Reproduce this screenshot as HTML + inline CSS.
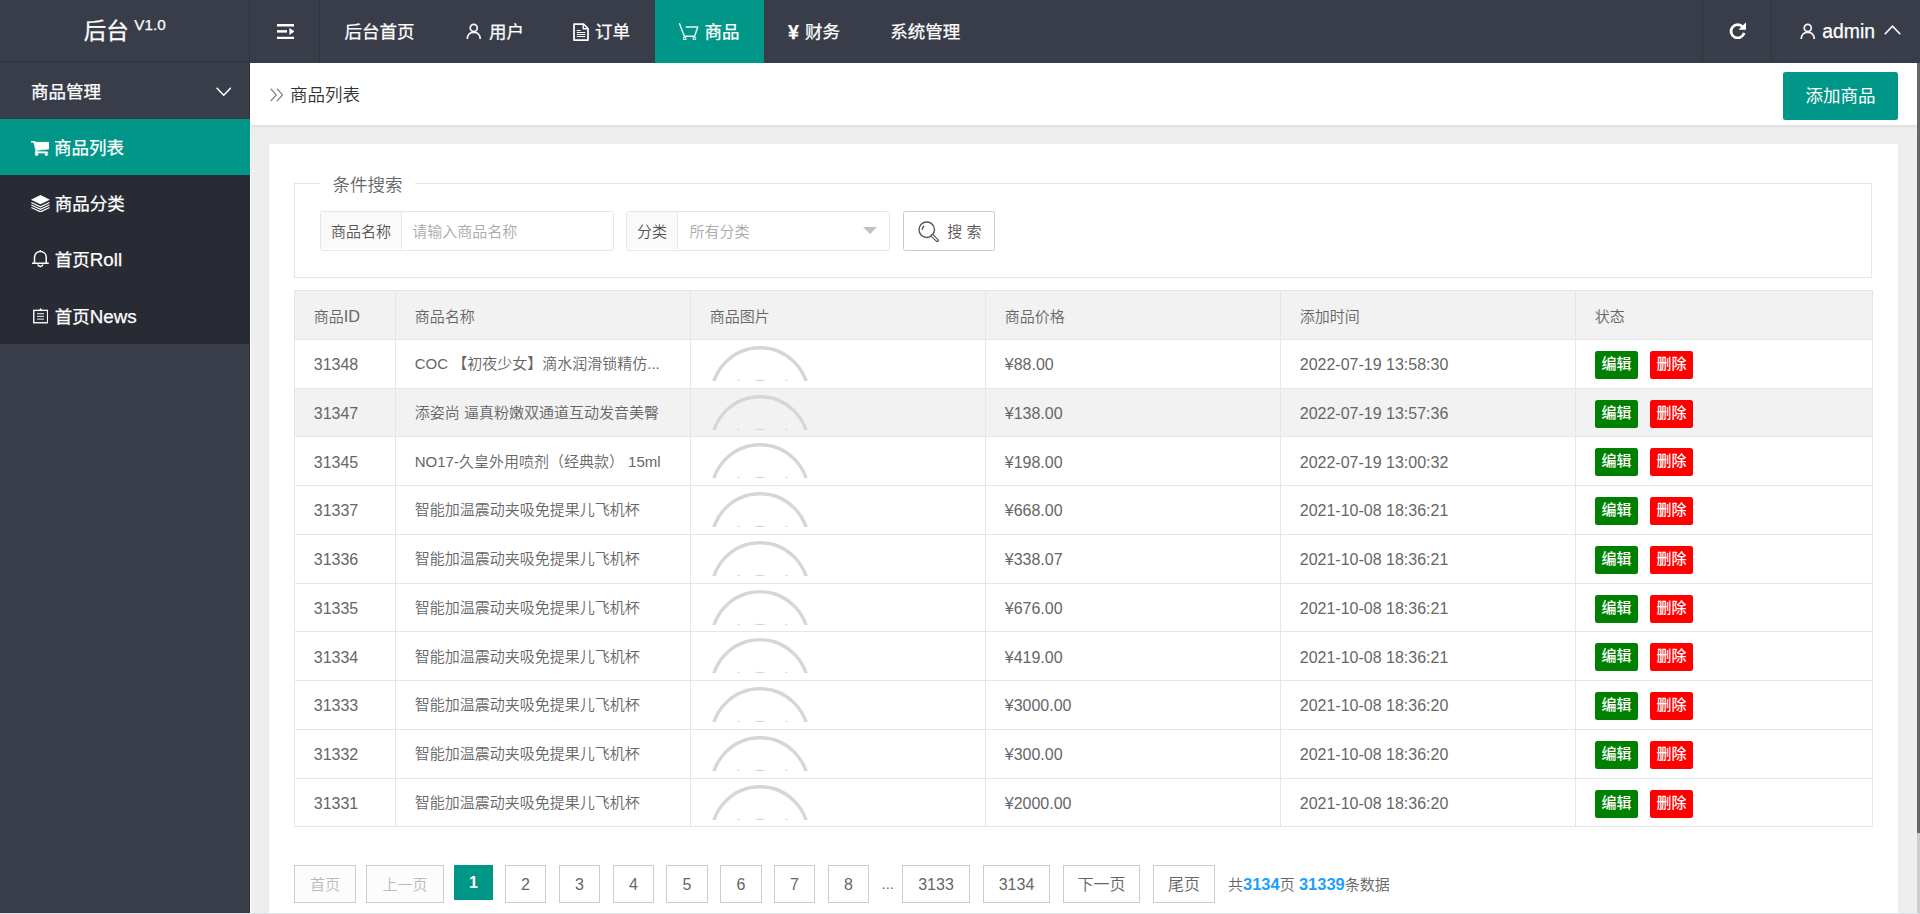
<!DOCTYPE html>
<html lang="zh-CN">
<head>
<meta charset="utf-8">
<title>后台</title>
<style>
html{zoom:1.25;}
@supports not (zoom:1.25){html{transform:scale(1.25);transform-origin:0 0;}}
*{box-sizing:border-box;}
html,body{margin:0;padding:0;}
body{width:1536px;height:731.2px;overflow:hidden;position:relative;background:#eee;color:#333;
  font-family:"Liberation Sans","Noto Sans CJK SC",sans-serif;font-size:14px;line-height:24px;}
ul,li{list-style:none;margin:0;padding:0;}
svg{display:inline-block;vertical-align:middle;}

/* header */
.header{position:absolute;left:0;top:0;width:1536px;height:50px;background:#393D49;color:#fff;-webkit-text-stroke:0.2px #fff;}
.logo{position:absolute;left:0;top:0;width:200px;height:49.4px;border-bottom:1px solid #30343f;border-right:1px solid #30343f;text-align:center;line-height:50px;font-size:18px;color:#fff;}
.logo .t{position:absolute;left:66.9px;top:0.9px;}
.logo sup{position:absolute;left:107.4px;top:-4.6px;font-size:12.2px;font-weight:normal;color:#fff;}
.toggle{position:absolute;left:200px;top:0;width:56px;height:50px;border-right:1px solid #30343f;}
.nav{position:absolute;left:256px;top:0;height:50px;}
.nav li{position:absolute;top:0;height:50px;line-height:50px;font-size:14px;color:#fff;white-space:nowrap;}
.nav li.on{background:#009688;}
.nav li span{position:absolute;top:0.8px;}
.nav li svg{position:absolute;}
.hright{position:absolute;right:0;top:0;height:50px;}
.refresh{position:absolute;left:1361.4px;top:0;width:56px;height:50px;border-left:1px solid #30343f;border-right:1px solid #30343f;}
.admin{position:absolute;left:1418px;top:0;width:118px;height:50px;line-height:50px;}

/* side */
.side{position:absolute;left:0;top:50px;width:200px;height:682px;background:#393D49;border-right:1px solid #2d313b;color:#fff;-webkit-text-stroke:0.2px #fff;}
.side .parent{position:absolute;left:0;top:0;width:200px;height:45px;line-height:45px;}
.side .parent span{position:absolute;left:24.8px;top:0.8px;}
.side .child{position:absolute;left:0;top:45px;width:200px;height:180px;background:#282B33;}
.side .child li{position:relative;height:45px;line-height:45px;}
.side .child li.on{background:#009688;}
.side .child li span{position:absolute;left:43.8px;top:0.8px;}
.side .child li.on span{left:43.2px;}
.side .child li span i{font-style:normal;font-size:15px;}
.side .child li svg{position:absolute;}

/* body */
.main{position:absolute;left:200px;top:50px;width:1336px;height:682px;background:#eee;overflow:hidden;font-weight:350;}
.crumb{position:absolute;left:0;top:0;width:1334px;height:50px;background:#fff;box-shadow:0 1px 4px rgba(0,0,0,.13);line-height:50px;}
.crumb .txt{position:absolute;left:32px;top:0.9px;color:#333;}
.addbtn{font-weight:400;position:absolute;left:1226.4px;top:7.6px;width:92px;height:38.4px;line-height:38.4px;background:#009688;color:#fff;text-align:center;border-radius:2px;font-size:14px;}
.card{position:absolute;left:15.2px;top:65.2px;width:1303.2px;height:700px;background:#fff;box-shadow:-1px 0 0 #e9e9e9;}
.main:before{content:"";position:absolute;left:0;top:50px;width:0.8px;height:640px;background:#fafafa;}
.fs{position:absolute;left:20px;top:31.2px;width:1262.4px;height:75.8px;border:1px solid #e6e6e6;}
.fs .lg{position:absolute;left:20px;top:-11.4px;background:#fff;padding:0 10px;font-size:14px;line-height:24px;color:#666;}
.grp{position:absolute;top:21.2px;height:32px;border:1px solid #e6e6e6;border-radius:2px;background:#fff;font-size:12px;line-height:32px;}
.grp .lb{position:absolute;left:0;top:0;height:30px;background:#FAFAFA;border-right:1px solid #e6e6e6;padding:0 8px;color:#555;border-radius:2px 0 0 2px;}
.grp .ph{position:absolute;top:0;color:#aaa;}
.edge{position:absolute;width:0;height:0;border:6px solid transparent;border-top-color:#c2c2c2;}
.sbtn{position:absolute;top:21.2px;height:32px;border:1px solid #C9C9C9;border-radius:2px;background:#fff;font-size:12px;line-height:30px;color:#555;}

table{font-weight:350;position:absolute;left:20px;top:116.8px;width:1262.4px;border-collapse:collapse;border-spacing:0;table-layout:fixed;font-size:12px;color:#666;}
th,td{border:1px solid #e6e6e6;padding:0 15px;height:39px;line-height:20px;text-align:left;font-weight:350;position:relative;white-space:nowrap;overflow:hidden;}
th{background:#f2f2f2;padding-top:2px;}
tr.alt td{background:#f2f2f2;}
td.n,td.d{font-size:12.8px;padding-top:1.5px;}
.b{font-weight:500;position:absolute;top:8.8px;height:22.4px;line-height:21.4px;width:34.2px;text-align:center;color:#fff;border-radius:2px;font-size:12px;}
.bg{background:#008000;left:15.4px;}
.br{background:#FF0000;left:59.4px;}
td.img{padding:0;}
td.img svg{position:absolute;left:15.2px;top:4.9px;}

.pg{position:absolute;left:20px;top:576.8px;height:30px;font-size:12px;color:#666;white-space:nowrap;}
.pg a,.pg span{position:absolute;top:0;height:30px;line-height:30.4px;border:1px solid #ccc;text-align:center;color:#666;background:#fff;}
.pg .dis{color:#bbb;background:#fcfcfc;border-color:#ccc;}
.pg .cur{border:0;height:28px;line-height:29.4px;background:#009688;color:#fff;font-weight:bold;}
.pg .dots{border:0;}
.pg .info{border:0;text-align:left;font-size:12px;top:0.3px;}
.pg .info b{color:#1E9FFF;font-size:13.2px;}
.pg a,.pg .cur{font-size:12.8px;}

.sbar{position:absolute;left:1533.6px;top:50px;width:2.4px;height:682px;background:#ccc;}
.sbar i{position:absolute;left:0;top:0;width:2.4px;height:616px;background:#666;}
.btm{position:absolute;left:0;top:730.4px;width:1536px;height:0.8px;background:#dfe3e8;}
</style>
</head>
<body>
<div class="header">
  <div class="logo"><span class="t">后台</span><sup>V1.0</sup></div>
  <div class="toggle"><svg style="position:absolute;left:21.4px;top:19.1px" width="14" height="12.2" viewBox="0 0 14 12.2"><g fill="#fff"><rect x="0" y="0" width="14" height="2"/><rect x="0" y="4.9" width="8" height="2"/><rect x="0" y="10.2" width="14" height="2"/><path d="M9.9 3.1 L14 5.9 L9.9 8.7Z"/></g></svg></div>
  <ul class="nav"><li style="left:0px;width:96px"><span style="left:19.6px">后台首页</span></li><li style="left:96px;width:86.4px"><svg style="position:absolute;left:20.8px;top:18.4px" width="12.4" height="13" viewBox="0 0 12.4 13"><g fill="none" stroke="#f4f4f5" stroke-width="1.4"><circle cx="6.2" cy="3.9" r="2.8"/><path d="M1 12.8 C1 9.4 3.2 7.4 6.2 7.4 C9.2 7.4 11.4 9.4 11.4 12.8"/></g></svg><span style="left:39.2px">用户</span></li><li style="left:182.39999999999998px;width:85.6px"><svg style="position:absolute;left:19.7px;top:18.4px" width="12.8" height="14.4" viewBox="0 0 12.8 14.4"><g fill="none" stroke="#fff" stroke-width="1.4" stroke-linejoin="round"><path d="M0.8 0.8 H8.4 L12 4.4 V13.6 H0.8Z"/></g><g fill="#fff"><rect x="3" y="5.6" width="3" height="0.8"/><rect x="3" y="7.2" width="6.8" height="0.8"/><rect x="3" y="8.8" width="6.8" height="0.8"/><rect x="3" y="10.4" width="6.8" height="0.8"/></g><path d="M8.2 1V4.6H12" fill="none" stroke="#fff" stroke-width="1.1"/></svg><span style="left:37.6px">订单</span></li><li style="left:268px;width:87.2px" class="on"><svg style="position:absolute;left:19.4px;top:18.2px" width="15.6" height="14" viewBox="0 0 15.6 14"><g fill="none" stroke="#fff" stroke-width="1.15" stroke-linejoin="round" stroke-linecap="round" opacity="0.9"><path d="M0.5 0.6 L4.2 10.6 H12.5 L15 3.2 H5.8"/><circle cx="4.6" cy="12.4" r="1.05" stroke-width="0.9"/><circle cx="12.3" cy="12.4" r="1.05" stroke-width="0.9"/></g></svg><span style="left:39.6px">商品</span></li><li style="left:355.20000000000005px;width:80.8px"><span style="left:19.2px;font-weight:bold;font-size:15.6px">¥</span><span style="left:32.8px">财务</span></li><li style="left:436px;width:96.8px"><span style="left:20.2px">系统管理</span></li></ul>
  <div class="refresh"><svg style="position:absolute;left:20.6px;top:17.7px" width="13.8" height="13.6" viewBox="0 0 13.8 13.6"><path d="M11.1 4.1 A5.3 5.3 0 1 0 12.1 8.7" fill="none" stroke="#fff" stroke-width="2.2"/><path d="M13.6 0.2 V6.2 H7.6Z" fill="#fff"/></svg></div>
  <div class="admin"><svg style="position:absolute;left:21.8px;top:18.4px" width="12.4" height="13" viewBox="0 0 12.4 13"><g fill="none" stroke="#f4f4f5" stroke-width="1.4"><circle cx="6.2" cy="3.9" r="2.8"/><path d="M1 12.8 C1 9.4 3.2 7.4 6.2 7.4 C9.2 7.4 11.4 9.4 11.4 12.8"/></g></svg><span style="position:absolute;left:39.8px;top:0;font-size:15.5px">admin</span><svg style="position:absolute;left:89px;top:19.7px" width="13.6" height="8" viewBox="0 0 13.6 8"><path d="M0.6 7.4 L6.8 1 L13 7.4" fill="none" stroke="#fff" stroke-width="1.3"/></svg></div>
</div>
<div class="side">
  <div class="parent"><span>商品管理</span><svg style="position:absolute;left:172.4px;top:19.4px" width="12.4" height="7.6" viewBox="0 0 12.4 7.6"><path d="M0.5 0.6 L6.2 6.6 L11.9 0.6" fill="none" stroke="#fff" stroke-width="1.2"/></svg></div>
  <ul class="child"><li class="on"><svg style="left:24.7px;top:17.7px" width="14.5" height="11.8" viewBox="0 128 1664 1408" preserveAspectRatio="none"><path fill="#fff" stroke="#fff" stroke-width="60" d="M640 1408q0 52-38 90t-90 38-90-38-38-90 38-90 90-38 90 38 38 90zm896 0q0 52-38 90t-90 38-90-38-38-90 38-90 90-38 90 38 38 90zm128-1088v512q0 24-16.500 42.500t-40.500 21.500l-1044 122q13 60 13 70 0 16-24 64h920q26 0 45 19t19 45-19 45-45 19h-1024q-26 0-45-19t-19-45q0-11 8-31.500t16-36 21.500-40 15.500-29.500l-177-823h-204q-26 0-45-19t-19-45 19-45 45-19h256q16 0 28.500 6.500t19.500 15.500 13 24.500 8 26 5.500 29.500 4.500 26h1201q26 0 45 19t19 45z"/></svg><span>商品列表</span></li><li><svg style="left:24.7px;top:15.6px" width="15.1" height="14" viewBox="0 0 15.1 14"><path fill="#fff" d="M7.55 0 L15.1 3.7 L7.55 7.4 L0 3.7Z"/><g fill="none" stroke="#fff" stroke-width="1"><path d="M0.3 6 L7.55 9.5 L14.8 6"/><path d="M0.3 8 L7.55 11.5 L14.8 8"/><path d="M0.3 10 L7.55 13.5 L14.8 10"/></g></svg><span>商品分类</span></li><li><svg style="left:25.6px;top:15.2px" width="13.4" height="14" viewBox="0 0 13.4 14"><g fill="none" stroke="#fff" stroke-width="1.2"><path d="M2 10.6 V6.2 C2 3.2 4 1.2 6.7 1.2 C9.4 1.2 11.4 3.2 11.4 6.2 V10.6"/><path d="M0 10.6 H13.4"/><path d="M4.6 11.6 C5.2 13.6 8.2 13.6 8.8 11.6"/><path d="M6.7 0 V1.4"/></g></svg><span>首页<i>Roll</i></span></li><li><svg style="left:26.3px;top:16.6px" width="12.3" height="12.4" viewBox="0 0 12.3 12.4"><g fill="none" stroke="#fff" stroke-width="1.1"><rect x="0.6" y="1.9" width="11.1" height="9.9"/></g><path d="M4.2 2.4 L6.15 0 L8.1 2.4Z" fill="#fff"/><g stroke="#ccc" stroke-width="1"><path d="M3.2 4.4H8.8M3.2 6.6H8.8M3.2 8.8H8.8"/></g></svg><span>首页<i>News</i></span></li></ul>
</div>
<div class="main">
  <div class="crumb"><svg style="position:absolute;left:16.1px;top:20.7px" width="11" height="11" viewBox="0 0 11 11"><path d="M0.6 0.6 L5 5.5 L0.6 10.4 M5.6 0.6 L10 5.5 L5.6 10.4" fill="none" stroke="#8a8a8a" stroke-width="1.1"/></svg><span class="txt">商品列表</span><div class="addbtn">添加商品</div></div>
  <div class="card"><div class="fs"><div class="lg">条件搜索</div><div class="grp" style="left:20px;width:234.8px"><div class="lb">商品名称</div><div class="ph" style="left:73px">请输入商品名称</div></div><div class="grp" style="left:264.8px;width:210.8px"><div class="lb">分类</div><div class="ph" style="left:50px">所有分类</div><div class="edge" style="left:189px;top:12.6px"></div></div><div class="sbtn" style="left:486.4px;width:73.4px"><svg style="position:absolute;left:10.9px;top:7.4px" width="17" height="17" viewBox="0 0 17 17"><g fill="none" stroke="#555" stroke-width="1.1"><circle cx="7" cy="7" r="6.2"/><path d="M3.4 7 A3.6 3.6 0 0 1 5 3.9"/><path d="M11.4 11.6 L15.4 15.6" stroke-width="2.6" stroke-linecap="round"/><path d="M11.6 11.8 L15.2 15.4" stroke="#fff" stroke-width="0.9" stroke-linecap="round"/></g></svg><span style="position:absolute;left:34.6px;top:0.8px">搜 索</span></div></div><table><colgroup><col style="width:80.8px"><col style="width:236px"><col style="width:236px"><col style="width:236px"><col style="width:236px"><col style="width:237.6px"></colgroup><thead><tr><th>商品<span style="font-size:13px">ID</span></th><th>商品名称</th><th>商品图片</th><th>商品价格</th><th>添加时间</th><th>状态</th></tr></thead><tbody><tr><td class="n">31348</td><td>COC 【初夜少女】滴水润滑锁精仿...</td><td class="img"><svg width="80" height="28" viewBox="0 0 80 28"><circle cx="40" cy="40" r="38.6" fill="none" stroke="#d9d5d5" stroke-width="2.7"/><path d="M21.6 28 L22.8 26.6 L24 28Z M35.6 28 C37 26.6 43 26.6 44.4 28Z M60 28 L61 26.6 L62.4 28Z" fill="#d9d5d5"/></svg></td><td class="n">¥88.00</td><td class="d">2022-07-19 13:58:30</td><td class="op"><span class="b bg">编辑</span><span class="b br">删除</span></td></tr><tr class="alt"><td class="n">31347</td><td>添姿尚 逼真粉嫩双通道互动发音美臀</td><td class="img"><svg width="80" height="28" viewBox="0 0 80 28"><circle cx="40" cy="40" r="38.6" fill="none" stroke="#d9d5d5" stroke-width="2.7"/><path d="M21.6 28 L22.8 26.6 L24 28Z M35.6 28 C37 26.6 43 26.6 44.4 28Z M60 28 L61 26.6 L62.4 28Z" fill="#d9d5d5"/></svg></td><td class="n">¥138.00</td><td class="d">2022-07-19 13:57:36</td><td class="op"><span class="b bg">编辑</span><span class="b br">删除</span></td></tr><tr><td class="n">31345</td><td>NO17-久皇外用喷剂（经典款） 15ml</td><td class="img"><svg width="80" height="28" viewBox="0 0 80 28"><circle cx="40" cy="40" r="38.6" fill="none" stroke="#d9d5d5" stroke-width="2.7"/><path d="M21.6 28 L22.8 26.6 L24 28Z M35.6 28 C37 26.6 43 26.6 44.4 28Z M60 28 L61 26.6 L62.4 28Z" fill="#d9d5d5"/></svg></td><td class="n">¥198.00</td><td class="d">2022-07-19 13:00:32</td><td class="op"><span class="b bg">编辑</span><span class="b br">删除</span></td></tr><tr><td class="n">31337</td><td>智能加温震动夹吸免提果儿飞机杯</td><td class="img"><svg width="80" height="28" viewBox="0 0 80 28"><circle cx="40" cy="40" r="38.6" fill="none" stroke="#d9d5d5" stroke-width="2.7"/><path d="M21.6 28 L22.8 26.6 L24 28Z M35.6 28 C37 26.6 43 26.6 44.4 28Z M60 28 L61 26.6 L62.4 28Z" fill="#d9d5d5"/></svg></td><td class="n">¥668.00</td><td class="d">2021-10-08 18:36:21</td><td class="op"><span class="b bg">编辑</span><span class="b br">删除</span></td></tr><tr><td class="n">31336</td><td>智能加温震动夹吸免提果儿飞机杯</td><td class="img"><svg width="80" height="28" viewBox="0 0 80 28"><circle cx="40" cy="40" r="38.6" fill="none" stroke="#d9d5d5" stroke-width="2.7"/><path d="M21.6 28 L22.8 26.6 L24 28Z M35.6 28 C37 26.6 43 26.6 44.4 28Z M60 28 L61 26.6 L62.4 28Z" fill="#d9d5d5"/></svg></td><td class="n">¥338.07</td><td class="d">2021-10-08 18:36:21</td><td class="op"><span class="b bg">编辑</span><span class="b br">删除</span></td></tr><tr><td class="n">31335</td><td>智能加温震动夹吸免提果儿飞机杯</td><td class="img"><svg width="80" height="28" viewBox="0 0 80 28"><circle cx="40" cy="40" r="38.6" fill="none" stroke="#d9d5d5" stroke-width="2.7"/><path d="M21.6 28 L22.8 26.6 L24 28Z M35.6 28 C37 26.6 43 26.6 44.4 28Z M60 28 L61 26.6 L62.4 28Z" fill="#d9d5d5"/></svg></td><td class="n">¥676.00</td><td class="d">2021-10-08 18:36:21</td><td class="op"><span class="b bg">编辑</span><span class="b br">删除</span></td></tr><tr><td class="n">31334</td><td>智能加温震动夹吸免提果儿飞机杯</td><td class="img"><svg width="80" height="28" viewBox="0 0 80 28"><circle cx="40" cy="40" r="38.6" fill="none" stroke="#d9d5d5" stroke-width="2.7"/><path d="M21.6 28 L22.8 26.6 L24 28Z M35.6 28 C37 26.6 43 26.6 44.4 28Z M60 28 L61 26.6 L62.4 28Z" fill="#d9d5d5"/></svg></td><td class="n">¥419.00</td><td class="d">2021-10-08 18:36:21</td><td class="op"><span class="b bg">编辑</span><span class="b br">删除</span></td></tr><tr><td class="n">31333</td><td>智能加温震动夹吸免提果儿飞机杯</td><td class="img"><svg width="80" height="28" viewBox="0 0 80 28"><circle cx="40" cy="40" r="38.6" fill="none" stroke="#d9d5d5" stroke-width="2.7"/><path d="M21.6 28 L22.8 26.6 L24 28Z M35.6 28 C37 26.6 43 26.6 44.4 28Z M60 28 L61 26.6 L62.4 28Z" fill="#d9d5d5"/></svg></td><td class="n">¥3000.00</td><td class="d">2021-10-08 18:36:20</td><td class="op"><span class="b bg">编辑</span><span class="b br">删除</span></td></tr><tr><td class="n">31332</td><td>智能加温震动夹吸免提果儿飞机杯</td><td class="img"><svg width="80" height="28" viewBox="0 0 80 28"><circle cx="40" cy="40" r="38.6" fill="none" stroke="#d9d5d5" stroke-width="2.7"/><path d="M21.6 28 L22.8 26.6 L24 28Z M35.6 28 C37 26.6 43 26.6 44.4 28Z M60 28 L61 26.6 L62.4 28Z" fill="#d9d5d5"/></svg></td><td class="n">¥300.00</td><td class="d">2021-10-08 18:36:20</td><td class="op"><span class="b bg">编辑</span><span class="b br">删除</span></td></tr><tr><td class="n">31331</td><td>智能加温震动夹吸免提果儿飞机杯</td><td class="img"><svg width="80" height="28" viewBox="0 0 80 28"><circle cx="40" cy="40" r="38.6" fill="none" stroke="#d9d5d5" stroke-width="2.7"/><path d="M21.6 28 L22.8 26.6 L24 28Z M35.6 28 C37 26.6 43 26.6 44.4 28Z M60 28 L61 26.6 L62.4 28Z" fill="#d9d5d5"/></svg></td><td class="n">¥2000.00</td><td class="d">2021-10-08 18:36:20</td><td class="op"><span class="b bg">编辑</span><span class="b br">删除</span></td></tr></tbody></table><div class="pg"><span class="dis" style="left:0.2px;width:49.2px">首页</span><span class="dis" style="left:57.8px;width:62px">上一页</span><span class="cur" style="left:128px;width:31.2px">1</span><a style="left:168.8px;width:32.6px">2</a><a style="left:212.2px;width:32.4px">3</a><a style="left:255.4px;width:32.4px">4</a><a style="left:297.8px;width:33.2px">5</a><a style="left:341px;width:33.2px">6</a><a style="left:384.2px;width:32.4px">7</a><a style="left:427.4px;width:32.4px">8</a><span class="dots" style="left:469px;width:12px">...</span><a style="left:486.6px;width:54px">3133</a><a style="left:551.4px;width:53.2px">3134</a><a style="left:615.4px;width:61.2px">下一页</a><a style="left:687.4px;width:49.4px">尾页</a><span class="info" style="left:747.2px;width:200px">共<b>3134</b>页 <b>31339</b>条数据</span></div></div>
</div>
<div class="sbar"><i></i></div>
<div class="btm"></div>
</body>
</html>
